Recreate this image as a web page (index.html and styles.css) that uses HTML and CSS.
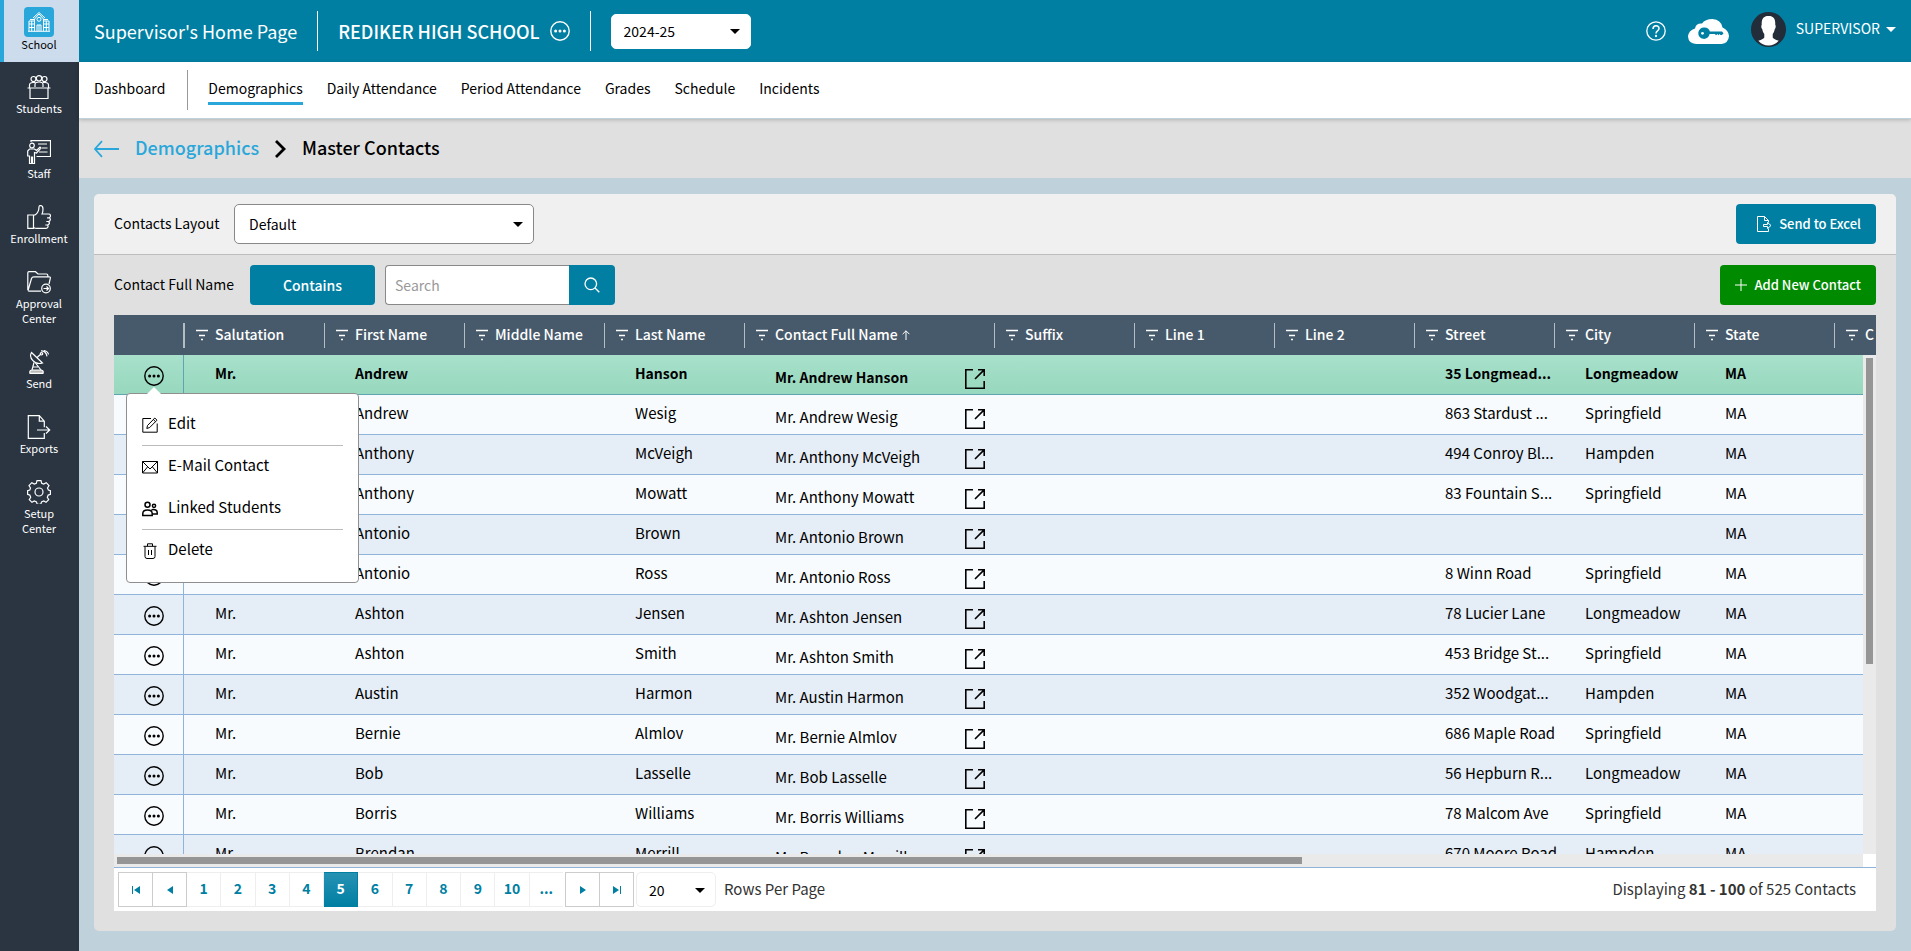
FILE: index.html
```html
<!DOCTYPE html>
<html lang="en">
  <head>
    <meta charset="utf-8">
    <title>Master Contacts</title>
    <link rel="stylesheet" href="styles.css">
  </head>
  <body>
    <!-- Shared icons -->
    <svg class="sprite" aria-hidden="true">
      <symbol id="more" viewBox="0 0 20 20">
        <circle cx="10" cy="10" r="9.2" fill="none" stroke="currentColor" stroke-width="1.4"/>
        <circle cx="5.6" cy="10" r="1.5" fill="currentColor"/>
        <circle cx="10" cy="10" r="1.5" fill="currentColor"/>
        <circle cx="14.4" cy="10" r="1.5" fill="currentColor"/>
      </symbol>
      <symbol id="open" viewBox="0 0 20 20">
        <path d="M8 .8H.8v18.4h18.4V12M10 10l8.6-8.6M13 .8h6.2V7" fill="none" stroke="currentColor" stroke-width="1.6"/>
      </symbol>
      <symbol id="filter" viewBox="0 0 12 12">
        <path d="M0 1.5h12M3 6.5h6M5 10.5h2" fill="none" stroke="currentColor" stroke-width="1.3"/>
      </symbol>
    </svg>

    <div class="app">
      <aside class="sidebar">
        <a class="side-item active" href="#">
          <span class="school-tile">
            <svg width="24" height="24" viewBox="0 0 24 24">
              <path d="M7.5 21V9L12 4l4.500 5v12M7.500 11H2v10M16.500 11H22v10M1 21.300h22M10 21v-6h4v6M12 15v6M3 9.500h4M17 9.500h4M2 14h5M2 17.500h5M17 14h5M17 17.500h5M4.700 11v10M19.300 11v10M6 8l6-5.500L18 8"/>
              <circle cx="12" cy="9.300" r="2"/>
            </svg>
          </span>
          School
        </a>
        <a class="side-item" href="#">
          <svg width="24" height="24" viewBox="0 0 24 24">
            <circle cx="6.500" cy="4" r="2.500"/><circle cx="12" cy="3.300" r="2.700"/><circle cx="17.500" cy="4" r="2.500"/>
            <path d="M2.500 12.500V10q0-2.500 3.500-2.500h2M21.500 12.500V10q0-2.500-3.500-2.500h-2M8 12V9.500Q8 7 12 7t4 2.500V12M.5 13h23M3 13v10.500h18V13"/>
          </svg>
          Students
        </a>
        <a class="side-item" href="#">
          <svg width="24" height="24" viewBox="0 0 24 24">
            <circle cx="5" cy="5.500" r="2.300"/>
            <path d="M4 2V.7h19.500V16.500H9.500M11 4h9M15 8h5.500M12 12h8.500M7.500 9H2.500L.7 11v5h1.800v7.500h2V17h1v6.500h2V12.500l2 .5L14 8l-1-1-3.500 3.500z"/>
          </svg>
          Staff
        </a>
        <a class="side-item" href="#">
          <svg width="24" height="24" viewBox="0 0 24 24">
            <path d="M.8 10h5.700v13.400H.8zM6.500 10.500C10 10 12 6 12 2q0-1.500 1.500-1.500Q16 .8 16 4c0 2-.5 4-1 5h6.500q2 0 2 1.700T22 12.800q1.500.5 1.300 2t-2 1.700q1.400.7 1 2t-2 1.500q1 .6.700 1.800t-2 1.600H10q-2 0-3.500-1M22 12.800h-2M21.300 16.500h-2M20.300 20h-2"/>
          </svg>
          Enrollment
        </a>
        <a class="side-item" href="#">
          <svg width="24" height="24" viewBox="0 0 24 24">
            <path d="M.8 20V3q0-1.300 1.200-1.300h6.500L11 4h8.500q1.300 0 1.300 1.300v1.500M1 20.500 4.500 8.500Q5 6.800 7 6.800h15q1.700 0 1.300 1.500L22 14M1 20.500q.3.700 1.500.7H14"/>
            <circle cx="19" cy="18.500" r="4.300"/><path d="M16.500 18.500h5M19.500 16.500l2 2-2 2"/>
          </svg>
          Approval<br>Center
        </a>
        <a class="side-item" href="#">
          <svg width="24" height="24" viewBox="0 0 24 24">
            <path d="M4.500 2.500C1.500 7 7 15.500 15.500 13zM4.500 2.500 15.500 13M10 7.500l4-3.500"/>
            <circle cx="14.500" cy="3.800" r="1.200"/>
            <path d="M14 .8q5 0 6 5.500M17 .5q4 1 4.500 4M7 12.500 5 20M8.500 13l5.500 7M6 17h5"/>
            <path d="M3 23.300q-1-3 2-3.300h9q3 .3 2 3.300z" fill="#bbb"/>
          </svg>
          Send
        </a>
        <a class="side-item" href="#">
          <svg width="24" height="24" viewBox="0 0 24 24">
            <path d="M17.300 18v5.300H1.300V.7h11l5 5.500v6M12.300.7v5.500h5M10 15h12.500M19 11.500l3.700 3.500L19 18.500"/>
          </svg>
          Exports
        </a>
        <a class="side-item" href="#">
          <svg width="24" height="24" viewBox="0 0 24 24">
            <circle cx="12" cy="12" r="4"/>
            <path d="M10 .7h4l.7 2.600 2 .8 2.500-1.400 2.800 2.800-1.500 2.500.9 2 2 .6v3.800l-2.200.700-.9 2.200 1.400 2.300-2.700 2.700-2.300-1.300-2.200.9-.7 2.400h-3.600l-.7-2.400-2.200-.9-2.300 1.300-2.700-2.700 1.400-2.300-.9-2.200-2.200-.7v-3.800l2.200-.6.700-2L2 5.500l2.800-2.800 2.500 1.400 2-.8z"/>
          </svg>
          Setup<br>Center
        </a>
      </aside>

      <div class="main">
        <header class="topbar">
          <span class="home-title">Supervisor's Home Page</span>
          <span class="bar"></span>
          <span class="school-name">REDIKER HIGH SCHOOL</span>
          <button class="icon-btn" aria-label="School options"><svg width="20" height="20"><use href="#more"/></svg></button>
          <span class="bar"></span>
          <span class="select year">
            <select aria-label="School year"><option>2024-25</option></select>
          </span>
          <div class="account">
            <button class="icon-btn" aria-label="Help">
              <svg width="20" height="20" viewBox="0 0 20 20" fill="none" stroke="currentColor" stroke-width="1.300">
                <circle cx="10" cy="10" r="9.200"/>
                <path d="M7 8q0-3.300 3-3.300T13 7.500q0 1.300-1.500 2.300T10 12.500" stroke-width="1.500"/>
                <circle cx="10" cy="15" r=".5"/>
              </svg>
            </button>
            <button class="icon-btn" aria-label="Cloud login">
              <svg width="41" height="25" viewBox="0 0 41 25">
                <path d="M8 25q-7.500-.5-8-7.500.5-6 7-8Q8 4 14 4.500 17 0 24.500 0 33 .5 34.500 8.500q6 2.500 6.500 8.500-.5 7-7.500 8z" fill="#fff"/>
                <path d="M16.500 8.500a5.700 5.700 0 0 1 5.400 4H34l1.500 1.700-1.500 1.800h-1.500l-1-1-1 1.200-1.200-1.200-1.200 1.200-1.300-1.200h-5.200a5.700 5.700 0 1 1-5.100-6.500z" fill="#007fa3"/>
                <circle cx="14.500" cy="14.300" r="1.400" fill="#fff"/>
              </svg>
            </button>
            <button class="user">
              <svg width="35" height="35" viewBox="0 0 35 35">
                <circle cx="17.500" cy="17.500" r="17.500" fill="#222d39"/>
                <path d="M17.500 4c5 0 7 2.500 6.800 9 .8.500.5 3.500-.6 4.300-.3 2-1 3.500-2 4.700v3.500q.5 1.500 6 3.300-4.200 4.700-10.200 4.700T7.300 28.800q5.500-1.800 6-3.300V22c-1-1.200-1.700-2.700-2-4.700-1.100-.8-1.400-3.800-.6-4.300C10.500 6.500 12.500 4 17.500 4z" fill="#fff"/>
              </svg>
              <span>SUPERVISOR</span>
              <i class="caret"></i>
            </button>
          </div>
        </header>

        <nav class="tabs">
          <a href="#">Dashboard</a>
          <span class="tab-bar"></span>
          <a class="current" href="#">Demographics</a>
          <a href="#">Daily Attendance</a>
          <a href="#">Period Attendance</a>
          <a href="#">Grades</a>
          <a href="#">Schedule</a>
          <a href="#">Incidents</a>
        </nav>

        <div class="crumbs">
          <a href="#" aria-label="Back">
            <svg width="25" height="18" viewBox="0 0 25 18" fill="none" stroke="currentColor" stroke-width="1.800"><path d="M25 9H1M8 1.200.9 9 8 16.800"/></svg>
          </a>
          <a class="crumb" href="#">Demographics</a>
          <svg width="11" height="18" viewBox="0 0 11 18" fill="none" stroke="#000" stroke-width="2.800"><path d="M1 1l8 8-8 8"/></svg>
          <h1 class="crumb">Master Contacts</h1>
        </div>

        <main class="content">
          <section class="panel">
            <div class="row layout-row">
              <label class="layout-label" for="layout">Contacts Layout</label>
              <span class="select layout">
                <select id="layout"><option>Default</option></select>
              </span>
              <button class="btn push">
                <svg width="16" height="16" viewBox="0 0 16 16" fill="none" stroke="currentColor"><path d="M12.500 12.500v3H1.500V.5h7l4 4v2M8.500.5v4h4M7.500 8.500h4v-2l3.500 3-3.500 3v-2h-4z"/></svg>
                Send to Excel
              </button>
            </div>

            <div class="row">
              <label class="search-label" for="search">Contact Full Name</label>
              <button class="btn contains">Contains</button>
              <div class="search">
                <input id="search" type="text" placeholder="Search">
                <button class="btn" aria-label="Search">
                  <svg width="16" height="16" viewBox="0 0 16 16" fill="none" stroke="currentColor" stroke-width="1.300"><circle cx="6.800" cy="6.800" r="5.800"/><path d="M11 11l4.300 4.300"/></svg>
                </button>
              </div>
              <button class="btn add push">
                <svg width="12" height="12" viewBox="0 0 12 12" fill="none" stroke="currentColor"><path d="M6 0v12M0 6h12"/></svg>
                Add New Contact
              </button>
            </div>

            <div class="grid">
              <div class="grid-view">
                <table>
                  <colgroup>
                    <col class="c-act"><col><col><col><col><col class="c-full"><col><col><col><col><col><col><col>
                  </colgroup>
                  <thead>
                    <tr>
                      <th></th>
                      <th><svg><use href="#filter"/></svg>Salutation</th>
                      <th><svg><use href="#filter"/></svg>First Name</th>
                      <th><svg><use href="#filter"/></svg>Middle Name</th>
                      <th><svg><use href="#filter"/></svg>Last Name</th>
                      <th><svg><use href="#filter"/></svg>Contact Full Name<svg class="sort" viewBox="0 0 8 10" fill="none" stroke="currentColor"><path d="M4 10V.8M.6 4.200 4 .8l3.400 3.400"/></svg></th>
                      <th><svg><use href="#filter"/></svg>Suffix</th>
                      <th><svg><use href="#filter"/></svg>Line 1</th>
                      <th><svg><use href="#filter"/></svg>Line 2</th>
                      <th><svg><use href="#filter"/></svg>Street</th>
                      <th><svg><use href="#filter"/></svg>City</th>
                      <th><svg><use href="#filter"/></svg>State</th>
                      <th><svg><use href="#filter"/></svg>C</th>
                    </tr>
                  </thead>
                  <tbody>
                    <tr class="selected">
                      <td><button class="icon-btn" aria-label="Actions"><svg><use href="#more"/></svg></button></td>
                      <td>Mr.</td><td>Andrew</td><td></td><td>Hanson</td>
                      <td><div class="full">Mr. Andrew Hanson <a href="#" aria-label="Open"><svg><use href="#open"/></svg></a></div></td>
                      <td></td><td></td><td></td><td>35 Longmead...</td><td>Longmeadow</td><td>MA</td><td></td>
                    </tr>
                    <tr>
                      <td><button class="icon-btn" aria-label="Actions"><svg><use href="#more"/></svg></button></td>
                      <td></td><td>Andrew</td><td></td><td>Wesig</td>
                      <td><div class="full">Mr. Andrew Wesig <a href="#" aria-label="Open"><svg><use href="#open"/></svg></a></div></td>
                      <td></td><td></td><td></td><td>863 Stardust ...</td><td>Springfield</td><td>MA</td><td></td>
                    </tr>
                    <tr>
                      <td><button class="icon-btn" aria-label="Actions"><svg><use href="#more"/></svg></button></td>
                      <td></td><td>Anthony</td><td></td><td>McVeigh</td>
                      <td><div class="full">Mr. Anthony McVeigh <a href="#" aria-label="Open"><svg><use href="#open"/></svg></a></div></td>
                      <td></td><td></td><td></td><td>494 Conroy Bl...</td><td>Hampden</td><td>MA</td><td></td>
                    </tr>
                    <tr>
                      <td><button class="icon-btn" aria-label="Actions"><svg><use href="#more"/></svg></button></td>
                      <td></td><td>Anthony</td><td></td><td>Mowatt</td>
                      <td><div class="full">Mr. Anthony Mowatt <a href="#" aria-label="Open"><svg><use href="#open"/></svg></a></div></td>
                      <td></td><td></td><td></td><td>83 Fountain S...</td><td>Springfield</td><td>MA</td><td></td>
                    </tr>
                    <tr>
                      <td><button class="icon-btn" aria-label="Actions"><svg><use href="#more"/></svg></button></td>
                      <td></td><td>Antonio</td><td></td><td>Brown</td>
                      <td><div class="full">Mr. Antonio Brown <a href="#" aria-label="Open"><svg><use href="#open"/></svg></a></div></td>
                      <td></td><td></td><td></td><td></td><td></td><td>MA</td><td></td>
                    </tr>
                    <tr>
                      <td><button class="icon-btn" aria-label="Actions"><svg><use href="#more"/></svg></button></td>
                      <td></td><td>Antonio</td><td></td><td>Ross</td>
                      <td><div class="full">Mr. Antonio Ross <a href="#" aria-label="Open"><svg><use href="#open"/></svg></a></div></td>
                      <td></td><td></td><td></td><td>8 Winn Road</td><td>Springfield</td><td>MA</td><td></td>
                    </tr>
                    <tr>
                      <td><button class="icon-btn" aria-label="Actions"><svg><use href="#more"/></svg></button></td>
                      <td>Mr.</td><td>Ashton</td><td></td><td>Jensen</td>
                      <td><div class="full">Mr. Ashton Jensen <a href="#" aria-label="Open"><svg><use href="#open"/></svg></a></div></td>
                      <td></td><td></td><td></td><td>78 Lucier Lane</td><td>Longmeadow</td><td>MA</td><td></td>
                    </tr>
                    <tr>
                      <td><button class="icon-btn" aria-label="Actions"><svg><use href="#more"/></svg></button></td>
                      <td>Mr.</td><td>Ashton</td><td></td><td>Smith</td>
                      <td><div class="full">Mr. Ashton Smith <a href="#" aria-label="Open"><svg><use href="#open"/></svg></a></div></td>
                      <td></td><td></td><td></td><td>453 Bridge St...</td><td>Springfield</td><td>MA</td><td></td>
                    </tr>
                    <tr>
                      <td><button class="icon-btn" aria-label="Actions"><svg><use href="#more"/></svg></button></td>
                      <td>Mr.</td><td>Austin</td><td></td><td>Harmon</td>
                      <td><div class="full">Mr. Austin Harmon <a href="#" aria-label="Open"><svg><use href="#open"/></svg></a></div></td>
                      <td></td><td></td><td></td><td>352 Woodgat...</td><td>Hampden</td><td>MA</td><td></td>
                    </tr>
                    <tr>
                      <td><button class="icon-btn" aria-label="Actions"><svg><use href="#more"/></svg></button></td>
                      <td>Mr.</td><td>Bernie</td><td></td><td>Almlov</td>
                      <td><div class="full">Mr. Bernie Almlov <a href="#" aria-label="Open"><svg><use href="#open"/></svg></a></div></td>
                      <td></td><td></td><td></td><td>686 Maple Road</td><td>Springfield</td><td>MA</td><td></td>
                    </tr>
                    <tr>
                      <td><button class="icon-btn" aria-label="Actions"><svg><use href="#more"/></svg></button></td>
                      <td>Mr.</td><td>Bob</td><td></td><td>Lasselle</td>
                      <td><div class="full">Mr. Bob Lasselle <a href="#" aria-label="Open"><svg><use href="#open"/></svg></a></div></td>
                      <td></td><td></td><td></td><td>56 Hepburn R...</td><td>Longmeadow</td><td>MA</td><td></td>
                    </tr>
                    <tr>
                      <td><button class="icon-btn" aria-label="Actions"><svg><use href="#more"/></svg></button></td>
                      <td>Mr.</td><td>Borris</td><td></td><td>Williams</td>
                      <td><div class="full">Mr. Borris Williams <a href="#" aria-label="Open"><svg><use href="#open"/></svg></a></div></td>
                      <td></td><td></td><td></td><td>78 Malcom Ave</td><td>Springfield</td><td>MA</td><td></td>
                    </tr>
                    <tr>
                      <td><button class="icon-btn" aria-label="Actions"><svg><use href="#more"/></svg></button></td>
                      <td>Mr.</td><td>Brendan</td><td></td><td>Merrill</td>
                      <td><div class="full">Mr. Brendan Merrill <a href="#" aria-label="Open"><svg><use href="#open"/></svg></a></div></td>
                      <td></td><td></td><td></td><td>670 Moore Road</td><td>Hampden</td><td>MA</td><td></td>
                    </tr>
                  </tbody>
                </table>
                <div class="vscroll"><div class="thumb"></div></div>
              </div>
              <div class="hscroll"><div class="track"><div class="thumb"></div></div></div>

              <footer class="pager">
                <button class="step" aria-label="First page"><svg width="8" height="8" viewBox="0 0 8 8"><path d="M0 0h1v8H0zM8 0v8L2 4z"/></svg></button>
                <button class="step" aria-label="Previous page"><svg width="8" height="8" viewBox="0 0 8 8"><path d="M7 0v8L1 4z"/></svg></button>
                <div class="pages">
                  <a href="#">1</a>
                  <a href="#">2</a>
                  <a href="#">3</a>
                  <a href="#">4</a>
                  <a class="on" href="#">5</a>
                  <a href="#">6</a>
                  <a href="#">7</a>
                  <a href="#">8</a>
                  <a href="#">9</a>
                  <a href="#">10</a>
                  <a href="#">...</a>
                </div>
                <button class="step" aria-label="Next page"><svg width="8" height="8" viewBox="0 0 8 8"><path d="M1 0v8l6-4z"/></svg></button>
                <button class="step" aria-label="Last page"><svg width="8" height="8" viewBox="0 0 8 8"><path d="M0 0v8l6-4zM7 0h1v8H7z"/></svg></button>
                <span class="select size">
                  <select id="size"><option>20</option></select>
                </span>
                <label for="size">Rows Per Page</label>
                <span class="summary push">Displaying <b>81 - 100</b> of 525 Contacts</span>
              </footer>

              <div class="menu">
                <button>
                  <svg viewBox="0 0 16 16"><path d="M9 1.500H.8v13.700h14.400V6.500"/><path d="M4.800 11.500l.7-3L12.800 1l2.200 2.200-7.300 7.300zM11.300 2.500l2.200 2.200"/></svg>
                  Edit
                </button>
                <hr>
                <button>
                  <svg viewBox="0 0 16 16"><path d="M.5 2.500h15v11.500H.5zM.5 2.500 8 10l7.500-7.500M.5 14l5-6M15.500 14l-5-6"/></svg>
                  E-Mail Contact
                </button>
                <button>
                  <svg class="bold" viewBox="0 0 16 16"><circle cx="5.500" cy="3.800" r="2.500"/><circle cx="12" cy="4.800" r="1.600"/><path d="M.8 14.500v-2q0-3.500 4.700-3.500t4.700 3.500v2zM9.500 8.800q5.700-1 5.700 2.700v1.500h-4.500"/></svg>
                  Linked Students
                </button>
                <hr>
                <button>
                  <svg viewBox="0 0 16 16"><path d="M1.500 3.300h13M5.500 3.300V.8h5v2.500M3 3.300v10.200q0 2 2 2h6q2 0 2-2V3.300M6.500 7v5M9.500 7v5"/></svg>
                  Delete
                </button>
              </div>
            </div>
          </section>
        </main>
      </div>
    </div>
  </body>
</html>
```
FILE: styles.css
```css
* {
  box-sizing: border-box;
}

body {
  margin: 0;
  font-family: "Noto Sans CJK SC", "Noto Sans", sans-serif;
  font-size: 14px;
  line-height: 20px;
  color: #000;
}

a {
  color: inherit;
  text-decoration: none;
}

button, select, input {
  font: inherit;
  color: inherit;
}

svg {
  display: block;
  flex: none;
}

.sprite {
  position: absolute;
  width: 0;
  height: 0;
}

.app {
  display: flex;
  height: 100vh;
  overflow: hidden;
}

/* Sidebar */
.sidebar {
  width: 79px;
  flex: none;
  background: #2a3541;
}

.side-item {
  display: flex;
  flex-direction: column;
  align-items: center;
  padding: 13px 1px 11px 0;
  font-size: 11px;
  line-height: 15px;
  text-align: center;
  color: #fff;
}

.side-item svg {
  margin-bottom: 2px;
  fill: none;
  stroke: #fff;
  stroke-width: 1.2;
}

.side-item.active {
  height: 62px;
  padding: 7px 5px 0 0;
  border-left: 4px solid #29a7da;
  background: #cddcec;
  color: #000;
}

.school-tile {
  width: 30px;
  height: 30px;
  padding: 3px;
  border-radius: 4px;
  background: #29a7da;
}

.school-tile svg {
  stroke-width: 1;
}

.main {
  flex: 1;
  min-width: 0;
  display: flex;
  flex-direction: column;
}

/* Top bar */
.topbar {
  display: flex;
  align-items: center;
  height: 62px;
  flex: none;
  padding: 0 15px;
  background: #007fa3;
  color: #fff;
}

.home-title, .school-name {
  font-size: 18px;
}

.school-name {
  font-weight: 500;
  margin-right: 10px;
}

.bar {
  width: 1px;
  height: 40px;
  margin: 0 20px;
  background: #fff;
}

.icon-btn {
  border: 0;
  padding: 0;
  background: none;
  cursor: pointer;
}

.select {
  position: relative;
  display: block;
}

.select select {
  width: 100%;
  height: 100%;
  padding: 0 12px;
  border: 1px solid #888;
  border-radius: 5px;
  background: #fff;
  color: #000;
  appearance: none;
}

.select::after {
  content: "";
  position: absolute;
  right: 11px;
  top: 50%;
  margin-top: -2px;
  border: 5px solid transparent;
  border-top-color: #000;
  border-bottom: 0;
  pointer-events: none;
}

.year {
  width: 140px;
  height: 35px;
}

.year select {
  border-color: #fff;
}

.account {
  display: flex;
  align-items: center;
  gap: 22px;
  margin-left: auto;
}

.user {
  display: flex;
  align-items: center;
  gap: 10px;
  padding: 0 0 3px;
  border: 0;
  background: none;
  cursor: pointer;
}

.user span {
  padding-bottom: 3px;
}

.caret {
  margin-left: -4px;
  border: 5px solid transparent;
  border-top-color: #fff;
  border-bottom: 0;
}

/* Tabs */
.tabs {
  position: relative;
  display: flex;
  align-items: center;
  gap: 24px;
  height: 57px;
  flex: none;
  padding: 0 15px;
  border-bottom: 1px solid #bfd1da;
  background: #fff;
  box-shadow: 0 1px 4px rgba(0, 0, 0, 0.2);
}

.tabs a {
  padding: 3px 0 4px;
  border-bottom: 3px solid transparent;
}

.tabs .current {
  border-bottom-color: #29a7da;
}

.tab-bar {
  width: 1px;
  height: 40px;
  margin: 0 -4px 0 -2px;
  background: #999;
}

/* Breadcrumbs */
.crumbs {
  display: flex;
  align-items: center;
  gap: 16px;
  height: 59px;
  flex: none;
  padding: 0 15px;
  background: #e0e0e0;
}

.crumbs a {
  color: #29a7da;
}

.crumb {
  margin: 0;
  padding-bottom: 3px;
  font-size: 18px;
  font-weight: 500;
}

/* Panel */
.content {
  flex: 1;
  min-height: 0;
  display: flex;
  padding: 16px 15px 20px;
  background: #bfd1da;
}

.panel {
  flex: 1;
  min-width: 0;
  display: flex;
  flex-direction: column;
  padding-bottom: 20px;
  border-radius: 5px;
  background: #e0e0e0;
}

.row {
  display: flex;
  align-items: center;
  gap: 10px;
  height: 60px;
  flex: none;
  padding: 0 20px;
}

.row label {
  padding-bottom: 3px;
  white-space: nowrap;
}

.layout-label {
  width: 110px;
}

.search-label {
  width: 126px;
}

.layout-row {
  height: 61px;
  border-bottom: 1px solid #bdbdbd;
  border-radius: 5px 5px 0 0;
  background: #f0f0f0;
}

.push {
  margin-left: auto;
}

.layout {
  width: 300px;
  height: 40px;
}

.layout select {
  padding: 0 14px;
}

.btn {
  display: flex;
  align-items: center;
  justify-content: center;
  gap: 7px;
  height: 40px;
  padding: 0 15px;
  border: 0;
  border-radius: 4px;
  background: #007fa3;
  color: #fff;
  font-weight: 500;
  cursor: pointer;
}

.btn.push {
  font-size: 13px;
}

.layout-row .btn {
  padding-left: 20px;
}

.contains {
  width: 125px;
}

.add {
  background: #008a00;
}

.search {
  display: flex;
}

.search input {
  width: 184px;
  height: 40px;
  padding: 0 9px;
  border: 1px solid #888;
  border-right: 0;
  border-radius: 4px 0 0 4px;
}

.search input::placeholder {
  color: #999;
}

.search .btn {
  border-radius: 0 4px 4px 0;
}

/* Grid */
.grid {
  position: relative;
  flex: 1;
  min-height: 0;
  display: flex;
  flex-direction: column;
  margin: 0 20px;
  background: #fff;
}

.grid-view {
  position: relative;
  flex: 1;
  min-height: 0;
  overflow: hidden;
}

table {
  width: 1860px;
  table-layout: fixed;
  border-collapse: separate;
  border-spacing: 0;
}

col {
  width: 140px;
}

.c-act {
  width: 70px;
}

.c-full {
  width: 250px;
}

th {
  position: relative;
  height: 40px;
  padding: 0 0 2px 31px;
  background: #475a6b;
  color: #fff;
  font-weight: 500;
  text-align: left;
  white-space: nowrap;
}

th:not(:first-child)::before {
  content: "";
  position: absolute;
  left: 0;
  top: 8px;
  width: 1px;
  height: 25px;
  background: #b5bdc4;
}

th:nth-child(2)::before {
  left: -1px;
  width: 2px;
}

th svg {
  position: absolute;
  left: 12px;
  top: 14px;
  width: 12px;
  height: 12px;
}

th .sort {
  position: static;
  display: inline-block;
  width: 8px;
  height: 10px;
  margin-left: 4px;
}

td {
  height: 40px;
  padding: 0 0 3px 31px;
  border-bottom: 1px solid #8fb3d9;
  background: #f7fbfe;
  font-size: 15px;
  vertical-align: middle;
  white-space: nowrap;
}

tbody tr:nth-child(odd) td {
  background: #e5edf6;
}

td:first-child {
  padding: 6px 0 0 30px;
  border-right: 1px solid #8fb3d9;
}

td:nth-child(6) {
  padding-bottom: 0;
}

td svg {
  width: 20px;
  height: 20px;
}

tbody tr.selected td {
  border-color: #5fa5b0;
  background: linear-gradient(#a8e0cb, #97d8be);
  font-size: 14px;
  font-weight: 700;
}

.full {
  display: flex;
  align-items: flex-start;
  justify-content: space-between;
  padding: 7px 9px 0 0;
}

.full a {
  margin-top: 2px;
}

.vscroll {
  position: absolute;
  top: 40px;
  right: 0;
  bottom: 0;
  width: 13px;
  padding: 3px;
  background: #eaeaea;
}

.vscroll .thumb {
  height: 62%;
}

.thumb {
  background: #959595;
}

.hscroll {
  flex: none;
  height: 14px;
  padding-right: 13px;
  border-bottom: 1px solid #8fb3d9;
}

.track {
  height: 13px;
  padding: 3px;
  background: #eaeaea;
}

.hscroll .thumb {
  width: 68%;
  height: 7px;
}

/* Pager */
.pager {
  display: flex;
  align-items: center;
  height: 43px;
  flex: none;
  padding: 0 20px 0 4px;
  color: #333;
}

.pager label, .summary {
  padding-bottom: 1px;
  font-size: 15px;
}

.step {
  display: flex;
  align-items: center;
  justify-content: center;
  width: 35px;
  height: 35px;
  padding: 0;
  border: 1px solid #ccc;
  background: #fff;
  cursor: pointer;
}

.step + .step {
  margin-left: -1px;
}

.step svg {
  fill: #007fa3;
}

.pages {
  display: flex;
  width: 376px;
  margin-right: 2px;
}

.pages a {
  flex: 1;
  height: 35px;
  border: 1px solid #eee;
  border-left: 0;
  color: #007fa3;
  font-weight: 700;
  line-height: 31px;
  text-align: center;
}

.pages a:last-child {
  border-right: 0;
}

.pages .on {
  border-color: #007fa3;
  background: linear-gradient(#2792b3, #007fa3);
  color: #fff;
}

.size {
  width: 80px;
  height: 35px;
  margin: 0 8px 0 2px;
}

.size select {
  border-color: #eee;
}

/* Row action menu */
.menu {
  position: absolute;
  left: 12px;
  top: 78px;
  width: 233px;
  padding: 9px 15px 11px;
  border: 1px solid #8f8f8f;
  border-radius: 4px;
  background: #fff;
}

.menu::before {
  content: "";
  position: absolute;
  left: 20px;
  top: -7px;
  border: 7px solid transparent;
  border-top: 0;
  border-bottom-color: #fff;
}

.menu button {
  display: flex;
  align-items: center;
  gap: 10px;
  width: 100%;
  height: 42px;
  padding: 0 0 2px;
  border: 0;
  background: none;
  font-size: 15px;
  text-align: left;
  cursor: pointer;
}

.menu hr {
  margin: 0 0 -1px;
  border: 0;
  border-top: 1px solid #bbb;
}

.menu svg {
  width: 16px;
  height: 16px;
  margin-top: 4px;
  fill: none;
  stroke: #000;
}

.menu .bold {
  stroke-width: 1.5;
}
```
